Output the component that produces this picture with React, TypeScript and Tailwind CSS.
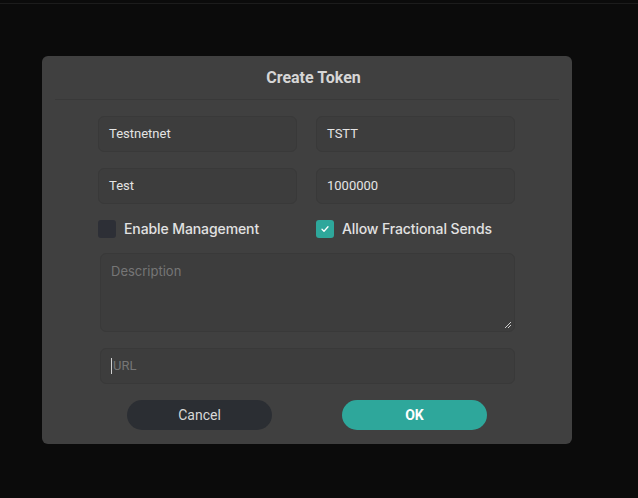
import React from "react";

const Field = ({ value, placeholder, caret }: { value?: string; placeholder?: string; caret?: boolean }) => (
  <div className="h-[36px] rounded-[6px] border border-[#393939] bg-[#3d3d3d] flex items-center px-[10px] text-[13px] font-['Roboto',sans-serif]">
    {caret && <span className="w-px h-[16px] bg-[#d0d0d0] mr-[1px]"></span>}
    {value ? (
      <span className="text-[#e4e4e4] -mt-[1px]">{value}</span>
    ) : (
      <span className="text-[#767676]">{placeholder}</span>
    )}
  </div>
);

const Check = ({ checked, label }: { checked?: boolean; label: string }) => (
  <label className="flex items-center gap-[8px]">
    <span
      className={`w-[18px] h-[18px] rounded-[3px] flex items-center justify-center ${
        checked ? "bg-[#2ea79b]" : "bg-[#2d2f36]"
      }`}
    >
      {checked && (
        <svg width="10" height="10" viewBox="0 0 10 10" fill="none">
          <path d="M2 5.2l2 2 4-4.4" stroke="#fff" strokeWidth="1.3" strokeLinecap="round" strokeLinejoin="round" />
        </svg>
      )}
    </span>
    <span className="text-[14px] tracking-[-0.1px] font-medium text-[#e2e2e2] font-['Inter',sans-serif]">{label}</span>
  </label>
);

export default function App() {
  return (
    <div className="h-[498px] bg-[#0b0b0b] overflow-hidden">
      <div className="h-[3px]" />
      <div className="h-px bg-[#1c1c1c]" />
      <div className="ml-[42px] mt-[52px] w-[530px] h-[388px] rounded-[6px] bg-[#404040]">
        <div className="mx-[13px] h-[44px] border-b border-[#393939] flex items-center justify-center">
          <h2 className="text-[16px] font-bold text-[#d6d6d6] font-['Roboto',sans-serif] ml-[13px]">
            Create Token
          </h2>
        </div>

        <div className="ml-[56px] w-[417px] pt-[16px] flex flex-col">
          <div className="grid grid-cols-2 gap-x-[19px] gap-y-[16px]">
            <Field value="Testnetnet" />
            <Field value="TSTT" />
            <Field value="Test" />
            <Field value="1000000" />
          </div>

          <div className="grid grid-cols-2 gap-x-[19px] mt-[14px] h-[18px]">
            <Check label="Enable Management" />
            <Check checked label="Allow Fractional Sends" />
          </div>

          <div className="ml-[2px] mt-[17px] relative h-[79px] rounded-[6px] border border-[#393939] bg-[#3d3d3d] px-[10px] pt-[8px] text-[13px] text-[#767676] font-['Inter',sans-serif]">
            Description
            <svg className="absolute right-[2px] bottom-[2px]" width="8" height="8" viewBox="0 0 8 8">
              <path d="M7 1L1 7M7 4L4 7" stroke="#cfcfcf" strokeWidth="1" />
            </svg>
          </div>

          <div className="ml-[2px] mt-[16px]">
            <Field placeholder="URL" caret />
          </div>

          <div className="flex pl-[29px] gap-[70px] mt-[16px]">
            <button className="w-[145px] h-[30px] rounded-full bg-[#2b2e33] text-[14px] text-[#d8d8d8] font-['Roboto',sans-serif]">
              Cancel
            </button>
            <button className="w-[145px] h-[30px] rounded-full bg-[#2ea79b] text-[14px] font-bold text-white font-['Roboto',sans-serif]">
              OK
            </button>
          </div>
        </div>
      </div>
    </div>
  );
}
